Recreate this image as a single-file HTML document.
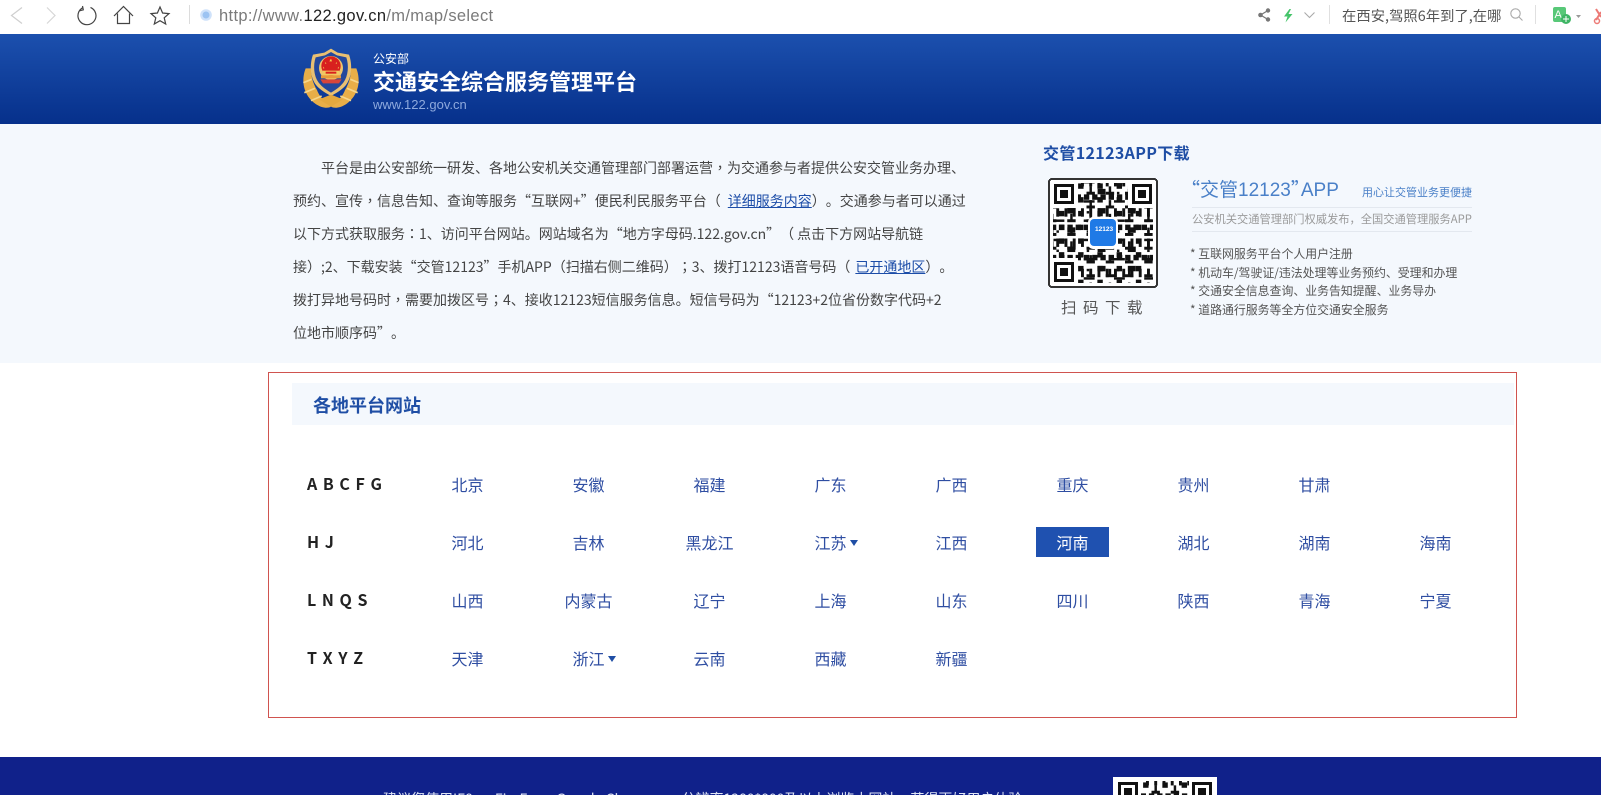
<!DOCTYPE html>
<html lang="zh-CN">
<head>
<meta charset="utf-8">
<title>交通安全综合服务管理平台</title>
<style>
html,body{margin:0;padding:0;width:1601px;height:795px;overflow:hidden;background:#fff}
body{position:relative;font-family:"Noto Sans CJK SC","Liberation Sans",sans-serif;color:#444;text-spacing-trim:space-all;font-feature-settings:"palt" 0}
.a{position:absolute;white-space:nowrap}
svg{position:absolute;overflow:visible}
.c{position:absolute;width:121px;text-align:center;font-size:16px;line-height:24px;color:#2f4ea2;white-space:nowrap}
.l{position:absolute;left:307px;font-size:16px;line-height:24px;font-weight:700;color:#222;word-spacing:2px;white-space:nowrap}
.p{position:absolute;left:293px;top:152px;font-size:14px;line-height:33px;color:#444;white-space:nowrap}
.p a{color:#1c4da8;text-decoration:underline}
.p i{font-style:normal;font-family:"Noto Sans CJK TC",sans-serif}
.li{position:absolute;left:1190px;font-size:11.9px;line-height:16px;color:#555;white-space:nowrap;filter:blur(.3px)}
.tri{display:inline-block;width:0;height:0;border-left:4px solid transparent;border-right:4px solid transparent;border-top:6px solid #1f4ea5;vertical-align:3px;margin-left:3px;margin-right:-11px}
</style>
</head>
<body>

<!-- browser toolbar -->
<svg style="left:0;top:0" width="340" height="34" viewBox="0 0 340 34" fill="none">
<path d="M22 7.5 11.5 15.5 22 23.5" stroke="#cfcfcf" stroke-width="1.2"/>
<path d="M47 7.5 55 15.5 47 23.5" stroke="#d6d6d6" stroke-width="1.2"/>
<path d="M83 7.6A9 9 0 1 0 90.5 7.4" stroke="#444" stroke-width="1.2"/>
<path d="M82.500 6 83.300 9.800 79.500 10.800" stroke="#444" stroke-width="1.2"/>
<path d="M114 16 123.5 6.5 133 16M117.5 13.5V23.5H129.5V13.5" stroke="#444" stroke-width="1.2"/>
<path d="M160 7 162.6 13 169 13.6 164.2 17.8 165.7 24 160 20.7 154.3 24 155.8 17.8 151 13.6 157.4 13Z" stroke="#444" stroke-width="1.2"/>
<path d="M189.500 5V24" stroke="#dcdcdc"/>
<circle cx="206" cy="15" r="5.800" fill="#cfe2fa"/><circle cx="206" cy="15" r="3.500" fill="#9cc3f2"/>
</svg>
<div class="a" style="left:219px;top:4px;font:16.5px/24px 'Liberation Sans',sans-serif;color:#7a7a7a;letter-spacing:.34px">http://www.<span style="color:#222">122.gov.cn</span>/m/map/select</div>

<svg style="left:1255px;top:0" width="346" height="34" viewBox="1255 0 346 34" fill="none">
<circle cx="1260.500" cy="15" r="2.300" fill="#777"/><circle cx="1268" cy="10.500" r="2.200" fill="#777"/><circle cx="1268" cy="19.500" r="2.200" fill="#777"/>
<path d="M1260.500 15 1268 10.500M1260.500 15 1268 19.500" stroke="#777" stroke-width="1.300"/>
<path d="M1289.500 9 1284 16.500H1287.500L1285.500 22.500 1292.500 14H1288.500L1291 9Z" fill="#45c46a"/>
<path d="M1304.500 12.500 1309.500 17.500 1314.500 12.500" stroke="#aaa" stroke-width="1.100"/>
<path d="M1329.500 5V24M1535.500 5V24" stroke="#e0e0e0"/>
<circle cx="1515.500" cy="13.500" r="4.700" stroke="#aaa" stroke-width="1.100"/><path d="M1519 17 1522.500 20.500" stroke="#aaa" stroke-width="1.100"/>
<rect x="1553" y="7" width="13" height="15" rx="2" fill="#58c878"/>
<text x="1554.500" y="18" font-family="Liberation Sans" font-size="11" fill="#fff">A</text>
<circle cx="1566" cy="19" r="5" fill="#3fb565"/><path d="M1566 16V22M1563 19H1569" stroke="#fff"/>
<path d="M1576 15H1581L1578.500 18Z" fill="#999"/>
<path d="M1596 9 1601 17M1601 12 1596 20" stroke="#ec7a76" stroke-width="2"/><circle cx="1597" cy="21" r="2.500" stroke="#ec7a76" stroke-width="1.500"/>
</svg>
<div class="a" style="left:1342px;top:4px;font-size:14.3px;line-height:24px;color:#555;letter-spacing:.05px">在西安,驾照6年到了,在哪</div>

<!-- banner -->
<div class="a" style="left:0;top:34px;width:1601px;height:90px;background:linear-gradient(#1c50ae,#06308b)"></div>
<svg style="left:295px;top:40px" width="180" height="80" viewBox="0 0 540 240">
<path d="M32 85C18 120 24 165 62 192 80 204 98 206 108 200 100 190 76 178 66 150 54 130 46 105 50 85Z" fill="#e8ae48"/>
<path d="M184 85C198 120 192 165 154 192 136 204 118 206 108 200 116 190 140 178 150 150 162 130 170 105 166 85Z" fill="#e8ae48"/>
<path d="M25 128 50 118M28 158 60 145M48 182 80 168M191 128 166 118M188 158 156 145M168 182 136 168" stroke="#f6d68a" stroke-width="5"/>
<path d="M108 26 128 38 162 44C172 72 172 112 152 136 140 150 122 160 108 168 94 160 76 150 64 136 44 112 44 72 54 44L88 38Z" fill="#e9c072"/>
<path d="M108 36 126 46 154 52C162 76 160 108 145 128 134 142 120 151 108 158 96 151 82 142 71 128 56 108 54 76 62 52L90 46Z" fill="#24489c"/>
<circle cx="108" cy="84" r="36" fill="#eec46c"/>
<circle cx="108" cy="78" r="29" fill="#d8201e"/>
<path d="M108 56 111 64H103ZM92 66 94 71H90ZM124 66 126 71H122ZM86 80 88 85H84ZM130 80 132 85H128Z" fill="#f6d054"/>
<rect x="84" y="92" width="48" height="14" fill="#f2c860"/><rect x="78" y="106" width="60" height="9" fill="#e89a3a"/><rect x="92" y="95" width="32" height="6" fill="#d8201e"/>
<path d="M76 118H140L132 130H84Z" fill="#d8453a"/>
<path d="M72 178 108 164 144 178 108 200Z" fill="#e3a83f"/>
</svg>
<div class="a" style="left:373px;top:50px;font-size:12px;line-height:18px;color:#fff">公安部</div>
<div class="a" style="left:373px;top:65px;font-size:22px;line-height:33px;color:#fff;font-weight:700">交通安全综合服务管理平台</div>
<div class="a" style="left:373px;top:96px;font:13px/18px 'Liberation Sans',sans-serif;color:#8ea9dd">www.122.gov.cn</div>

<!-- intro -->
<div class="a" style="left:0;top:124px;width:1601px;height:239px;background:#f4f8fd"></div>
<div class="p"><span style="margin-left:28px">平台是由公安部统一研发、各地公安机关交通管理部门部署运营<i lang="zh-TW">，</i>为交通参与者提供公安交管业务办理、</span><br>预约、宣传<i lang="zh-TW">，</i>信息告知、查询等服务“互联网+”便民利民服务平台（<a style="margin-left:7px">详细服务内容</a>）。交通参与者可以通过<br>以下方式获取服务<i lang="zh-TW">：</i>1、访问平台网站。网站域名为“地方字母码.122.gov.cn”（<span style="margin-left:3px">点击下方网站导航链</span><br>接）;2、下载安装“交管12123”手机APP（扫描右侧二维码）<i lang="zh-TW">；</i>3、拨打12123语音号码（<a style="margin-left:5px">已开通地区</a>）。<br>拨打异地号码时<i lang="zh-TW">，</i>需要加拨区号<i lang="zh-TW">；</i>4、接收12123短信服务信息。短信号码为“12123+2位省份数字代码+2<br>位地市顺序码”。</div>

<div class="a" style="left:1043px;top:140px;font-size:16px;line-height:24px;font-weight:700;color:#1f4ea5;letter-spacing:.35px">交管12123APP下载</div>

<!-- QR -->
<svg style="left:1048px;top:178px" width="110" height="110" viewBox="0 0 110 110" shape-rendering="crispEdges">
<defs>
<pattern id="qa" width="19.250" height="13.750" patternUnits="userSpaceOnUse"><rect width="8.250" height="2.750" fill="#111"/><rect x="11" y="5.500" width="5.500" height="5.500" fill="#111"/><rect x="2.750" y="8.250" width="2.750" height="5.500" fill="#111"/></pattern>
<pattern id="qb" width="8.250" height="30.250" patternUnits="userSpaceOnUse"><rect width="2.750" height="8.250" fill="#111"/><rect x="2.750" y="16.500" width="5.500" height="5.500" fill="#111"/></pattern>
<pattern id="qc" width="30.250" height="19.250" patternUnits="userSpaceOnUse"><rect x="5.500" y="2.750" width="11" height="2.750" fill="#111"/><rect x="19.250" y="11" width="8.250" height="5.500" fill="#111"/><rect x="8.250" y="13.750" width="2.750" height="2.750" fill="#111"/></pattern>
</defs>
<rect x="1" y="1" width="108" height="108" rx="3" fill="#fff" stroke="#333" stroke-width="2"/>
<rect x="5" y="5" width="100" height="100" fill="url(#qa)"/><rect x="5" y="5" width="100" height="100" fill="url(#qb)"/><rect x="5" y="5" width="100" height="100" fill="url(#qc)"/>
<rect x="5" y="5" width="25" height="25" fill="#fff"/><rect x="6" y="6" width="20" height="20" fill="#111"/><rect x="9" y="9" width="14" height="14" fill="#fff"/><rect x="12" y="12" width="8" height="8" fill="#111"/>
<rect x="80" y="5" width="25" height="25" fill="#fff"/><rect x="84" y="6" width="20" height="20" fill="#111"/><rect x="87" y="9" width="14" height="14" fill="#fff"/><rect x="90" y="12" width="8" height="8" fill="#111"/>
<rect x="5" y="80" width="25" height="25" fill="#fff"/><rect x="6" y="84" width="20" height="20" fill="#111"/><rect x="9" y="87" width="14" height="14" fill="#fff"/><rect x="12" y="90" width="8" height="8" fill="#111"/>
<rect x="40" y="39" width="30" height="32" rx="5" fill="#fff" shape-rendering="auto"/>
<rect x="42" y="41" width="26" height="27" rx="4" fill="#1f7ae6" shape-rendering="auto"/>
</svg>
<div class="a" style="left:1095px;top:226px;font:bold 6.5px/8px 'Liberation Sans',sans-serif;color:#fff">12123</div>
<div class="a" style="left:1061px;top:295px;font-size:15.500px;line-height:24px;color:#555;letter-spacing:6.500px">扫码下载</div>

<div class="a" style="left:1181px;top:173px;font-family:'Liberation Sans','Noto Sans CJK SC',sans-serif;font-size:19px;line-height:32px;color:#4a80c8;filter:blur(.3px)"><span style="font-family:'Noto Sans CJK SC',sans-serif">“交管</span>12123<span style="font-family:'Noto Sans CJK SC',sans-serif;margin-right:-9px">”</span>APP</div>
<div class="a" style="left:1362px;top:183px;font-size:11px;line-height:18px;color:#4a80c8;filter:blur(.3px)">用心让交管业务更便捷</div>
<div class="a" style="left:1192px;top:207px;width:280px;height:1px;background:#e3e8ef"></div>
<div class="a" style="left:1192px;top:211px;font-size:11.25px;line-height:16px;color:#9a9a9a;filter:blur(.3px)">公安机关交通管理部门权威发布，全国交通管理服务APP</div>
<div class="a" style="left:1192px;top:231px;width:280px;height:1px;background:#e3e8ef"></div>
<div class="li" style="top:246px">* 互联网服务平台个人用户注册</div>
<div class="li" style="top:265px">* 机动车/驾驶证/违法处理等业务预约、受理和办理</div>
<div class="li" style="top:283px">* 交通安全信息查询、业务告知提醒、业务导办</div>
<div class="li" style="top:302px">* 道路通行服务等全方位交通安全服务</div>

<!-- province box -->
<div class="a" style="left:268px;top:372px;width:1247px;height:344px;border:1px solid #d0534f;box-sizing:content-box"></div>
<div class="a" style="left:292px;top:383px;width:1222px;height:42px;background:#f4f8fd"></div>
<div class="a" style="left:313px;top:392px;font-size:18px;line-height:27px;font-weight:700;color:#1f4ea5">各地平台网站</div>

<div class="l" style="top:471px">A B C F G</div>
<div class="l" style="top:529px">H J</div>
<div class="l" style="top:587px">L N Q S</div>
<div class="l" style="top:645px">T X Y Z</div>

<div class="c" style="left:407px;top:472px">北京</div>
<div class="c" style="left:528px;top:472px">安徽</div>
<div class="c" style="left:649px;top:472px">福建</div>
<div class="c" style="left:770px;top:472px">广东</div>
<div class="c" style="left:891px;top:472px">广西</div>
<div class="c" style="left:1012px;top:472px">重庆</div>
<div class="c" style="left:1133px;top:472px">贵州</div>
<div class="c" style="left:1254px;top:472px">甘肃</div>

<div class="c" style="left:407px;top:530px">河北</div>
<div class="c" style="left:528px;top:530px">吉林</div>
<div class="c" style="left:649px;top:530px">黑龙江</div>
<div class="c" style="left:770px;top:530px">江苏<span class="tri"></span></div>
<div class="c" style="left:891px;top:530px">江西</div>
<div class="a" style="left:1036px;top:527px;width:73px;height:30px;background:#1f51b0;color:#fff;font-size:16px;line-height:30px;text-align:center">河南</div>
<div class="c" style="left:1133px;top:530px">湖北</div>
<div class="c" style="left:1254px;top:530px">湖南</div>
<div class="c" style="left:1375px;top:530px">海南</div>

<div class="c" style="left:407px;top:588px">山西</div>
<div class="c" style="left:528px;top:588px">内蒙古</div>
<div class="c" style="left:649px;top:588px">辽宁</div>
<div class="c" style="left:770px;top:588px">上海</div>
<div class="c" style="left:891px;top:588px">山东</div>
<div class="c" style="left:1012px;top:588px">四川</div>
<div class="c" style="left:1133px;top:588px">陕西</div>
<div class="c" style="left:1254px;top:588px">青海</div>
<div class="c" style="left:1375px;top:588px">宁夏</div>

<div class="c" style="left:407px;top:646px">天津</div>
<div class="c" style="left:528px;top:646px">浙江<span class="tri"></span></div>
<div class="c" style="left:649px;top:646px">云南</div>
<div class="c" style="left:770px;top:646px">西藏</div>
<div class="c" style="left:891px;top:646px">新疆</div>

<!-- footer -->
<div class="a" style="left:0;top:757px;width:1601px;height:38px;background:#10218a"></div>
<div class="a" style="left:383px;top:789px;font-size:14px;line-height:21px;color:#dfe5f5">建议您使用IE9+、FireFox、Google Chrome，<span style="margin-left:10px">分辨率1280*800及以上浏览本网站，获得更好用户体验。</span></div>
<svg style="left:1113px;top:777px" width="104" height="18" viewBox="0 0 104 18" shape-rendering="crispEdges">
<rect width="104" height="18" fill="#fff"/>
<rect x="4" y="4" width="96" height="14" fill="url(#qa)"/><rect x="4" y="4" width="96" height="14" fill="url(#qb)"/>
<rect x="4" y="4" width="24" height="14" fill="#fff"/><rect x="5" y="5" width="20" height="13" fill="#111"/><rect x="8" y="8" width="14" height="10" fill="#fff"/><rect x="11" y="11" width="8" height="7" fill="#111"/>
<rect x="76" y="4" width="24" height="14" fill="#fff"/><rect x="79" y="5" width="20" height="13" fill="#111"/><rect x="82" y="8" width="14" height="10" fill="#fff"/><rect x="85" y="11" width="8" height="7" fill="#111"/>
</svg>

</body>
</html>
